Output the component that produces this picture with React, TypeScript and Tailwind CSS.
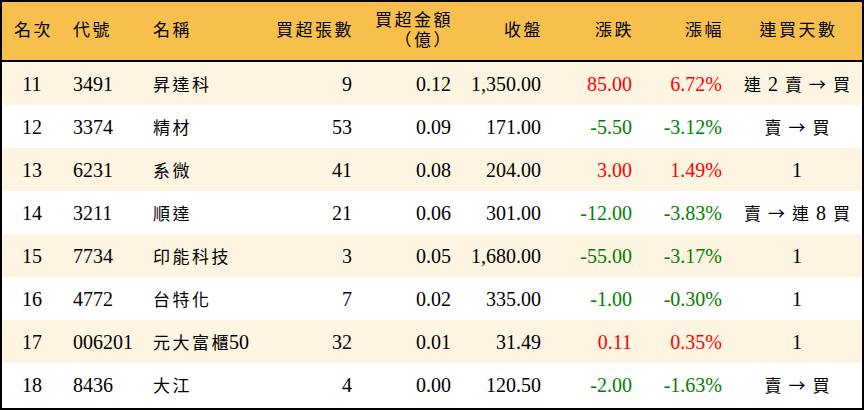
const rows = [
  { rank: 11, code: "3491", name: "昇達科", vol: "9", amt: "0.12", close: "1,350.00", chg: "85.00", pct: "6.72%", days: "連 2 賣 → 買" },
  { rank: 12, code: "3374", name: "精材", vol: "53", amt: "0.09", close: "171.00", chg: "-5.50", pct: "-3.12%", days: "賣 → 買" },
  { rank: 13, code: "6231", name: "系微", vol: "41", amt: "0.08", close: "204.00", chg: "3.00", pct: "1.49%", days: "1" },
  { rank: 14, code: "3211", name: "順達", vol: "21", amt: "0.06", close: "301.00", chg: "-12.00", pct: "-3.83%", days: "賣 → 連 8 買" },
  { rank: 15, code: "7734", name: "印能科技", vol: "3", amt: "0.05", close: "1,680.00", chg: "-55.00", pct: "-3.17%", days: "1" },
  { rank: 16, code: "4772", name: "台特化", vol: "7", amt: "0.02", close: "335.00", chg: "-1.00", pct: "-0.30%", days: "1" },
  { rank: 17, code: "006201", name: "元大富櫃", suffix: "50", vol: "32", amt: "0.01", close: "31.49", chg: "0.11", pct: "0.35%", days: "1" },
  { rank: 18, code: "8436", name: "大江", vol: "4", amt: "0.00", close: "120.50", chg: "-2.00", pct: "-1.63%", days: "賣 → 買" },
];

const grid = "grid grid-cols-[60px_80px_120px_100px_99px_90px_91px_90px_130px]";
const zh = "text-[17px] tracking-[2.5px]";

// mixed text: CJK chars smaller, digits in serif size, arrow from the CJK font
function Mixed({ text }: { text: string }) {
  return (
    <>
      {text.split(" ").map((part, i) => {
        if (part === "→") {
          return (
            <span key={i} className="text-[17px] mx-[4px] font-['Noto_Sans_CJK_TC',sans-serif]">
              →
            </span>
          );
        }
        return (
          <span key={i} className={/[0-9]/.test(part) ? "text-[20px] mx-[4px]" : "text-[17px] mx-[3px]"}>
            {part}
          </span>
        );
      })}
    </>
  );
}

export default function App() {
  return (
    <div className="w-[864px] h-[410px] bg-white border-2 border-black font-['Liberation_Serif','Noto_Sans_CJK_TC',serif] text-black">
      <div className={`${grid} h-[60px] bg-[#f7c04c] border-b-2 border-black items-center`}>
        <div className={`${zh} text-center pl-[3px]`}>名次</div>
        <div className={`${zh} pl-[11px]`}>代號</div>
        <div className={`${zh} pl-[11px]`}>名稱</div>
        <div className={`${zh} text-right pr-[8px]`}>買超張數</div>
        <div className={`${zh} text-right pr-[8px] leading-[20px]`}>
          買超金額
          <br />
          （億）
        </div>
        <div className={`${zh} text-right pr-[8px]`}>收盤</div>
        <div className={`${zh} text-right pr-[8px]`}>漲跌</div>
        <div className={`${zh} text-right pr-[8px]`}>漲幅</div>
        <div className={`${zh} text-center pl-[3px]`}>連買天數</div>
      </div>
      {rows.map((r, i) => {
        const up = !r.chg.startsWith("-");
        const color = up ? "text-[#ff0000]" : "text-[#008000]";
        return (
          <div key={r.rank} className={`${grid} h-[43px] items-center text-[20px] ${i % 2 === 0 ? "bg-[#fdf5e1]" : "bg-white"}`}>
            <div className="text-center">{r.rank}</div>
            <div className="pl-[11px]">{r.code}</div>
            <div className="pl-[11px]">
              <span className={zh}>{r.name}</span>
              {r.suffix && <span className="-ml-[2px]">{r.suffix}</span>}
            </div>
            <div className="text-right pr-[10px]">{r.vol}</div>
            <div className="text-right pr-[10px]">{r.amt}</div>
            <div className="text-right pr-[10px]">{r.close}</div>
            <div className={`text-right pr-[10px] ${color}`}>{r.chg}</div>
            <div className={`text-right pr-[10px] ${color}`}>{r.pct}</div>
            <div className="text-center">
              <Mixed text={r.days} />
            </div>
          </div>
        );
      })}
    </div>
  );
}
